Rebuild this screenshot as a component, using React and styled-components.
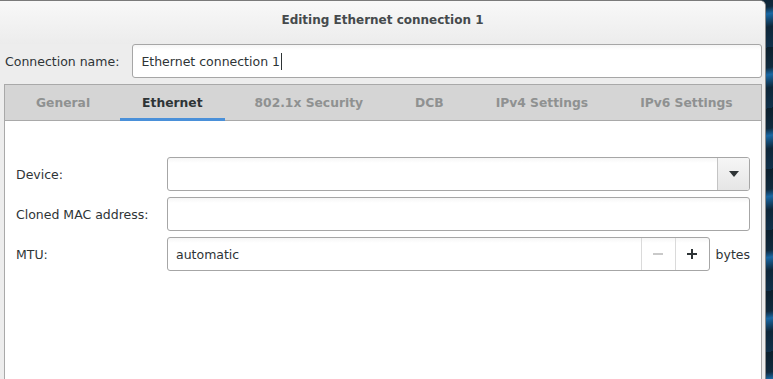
import React from "react";
import styled, { createGlobalStyle } from "styled-components";

const Global = createGlobalStyle`
  html, body { margin: 0; padding: 0; }
  body {
    width: 773px;
    height: 379px;
    overflow: hidden;
    font-family: "DejaVu Sans", "Liberation Sans", sans-serif;
    font-size: 12.5px;
    color: #2e3436;
    background:
      repeating-linear-gradient(170deg, #0c1f2c 0px, #102a3e 20px, #1967a3 27px, #0e2638 40px, #10304a 60px);
  }
`;

const Desktop = styled.div`
  width: 773px;
  height: 379px;
  display: flex;
`;

const Window = styled.div`
  width: 766px;
  height: 379px;
  box-sizing: border-box;
  background: #ededed;
  border-top: 1px solid #7a7a7a;
  border-right: 1px solid #8c8c8c;
  border-top-right-radius: 6px;
  display: flex;
  flex-direction: column;
  overflow: hidden;
`;

const TitleBar = styled.div`
  height: 43px;
  flex: none;
  display: flex;
  align-items: center;
  justify-content: center;
  padding-bottom: 6px;
  box-sizing: border-box;
  background: linear-gradient(#f8f8f8, #ececec);
  font-weight: bold;
  font-size: 12px;
  color: #454a4c;
`;

const NameRow = styled.div`
  display: flex;
  align-items: center;
  padding: 0 3px 0 5px;
  height: 34px;
  flex: none;
`;

const Label = styled.span`
  white-space: nowrap;
  color: #2e3436;
`;

const Entry = styled.div`
  flex: 1;
  height: 34px;
  box-sizing: border-box;
  border: 1px solid #a6a6a6;
  border-radius: 3px;
  background: linear-gradient(#f6f6f6, #ffffff 5px);
  display: flex;
  align-items: center;
  padding-left: ${(p) => p.$pad || 8}px;
  margin-left: ${(p) => p.$ml || 0}px;
  color: #2e3436;
  overflow: hidden;
`;

const Caret = styled.span`
  display: inline-block;
  width: 1px;
  height: 17px;
  background: #2e3436;
  margin-left: 1px;
`;

const Notebook = styled.div`
  margin: 6px 3px 0 4px;
  flex: 1;
  display: flex;
  flex-direction: column;
`;

const TabStrip = styled.div`
  height: 37px;
  box-sizing: border-box;
  background: #d5d5d5;
  border: 1px solid #a9a9a9;
  display: flex;
  padding-left: 9px;
  gap: 8px;
`;

const Tab = styled.div`
  padding: 0 22px;
  display: flex;
  align-items: center;
  font-weight: bold;
  font-size: 12.3px;
  color: ${(p) => (p.$active ? "#2e3436" : "#8f9191")};
  box-shadow: ${(p) => (p.$active ? "inset 0 -3px 0 #4a90d9" : "none")};
  margin-bottom: -1px;
  white-space: nowrap;
`;

const Page = styled.div`
  flex: 1;
  background: #ffffff;
  border-left: 1px solid #a9a9a9;
  border-right: 1px solid #a9a9a9;
  display: grid;
  grid-template-columns: 151px 1fr;
  grid-auto-rows: 34px;
  row-gap: 6px;
  align-content: start;
  padding: 36px 11px 0 11px;
`;

const FieldLabel = styled.div`
  display: flex;
  align-items: center;
  color: #2e3436;
`;

const Combo = styled.div`
  display: flex;
  height: 34px;
  box-sizing: border-box;
  border: 1px solid #a6a6a6;
  border-radius: 3px;
  overflow: hidden;
  background: linear-gradient(#f6f6f6, #ffffff 5px);
`;

const ComboText = styled.div`
  flex: 1;
`;

const ComboButton = styled.div`
  width: 31px;
  border-left: 1px solid #c4c4c4;
  background: linear-gradient(#f6f6f6, #e6e6e6);
  display: flex;
  align-items: center;
  justify-content: center;
`;

const SpinRow = styled.div`
  display: flex;
  align-items: center;
`;

const Spin = styled.div`
  flex: 1;
  display: flex;
  height: 34px;
  box-sizing: border-box;
  border: 1px solid #a6a6a6;
  border-radius: 3px;
  overflow: hidden;
  background: linear-gradient(#f6f6f6, #ffffff 5px);
`;

const SpinText = styled.div`
  flex: 1;
  display: flex;
  align-items: center;
  padding-left: 8px;
  color: #2e3436;
`;

const SpinButton = styled.div`
  width: 33px;
  border-left: 1px solid #dadada;
  display: flex;
  align-items: center;
  justify-content: center;
  color: ${(p) => (p.$disabled ? "#c9c9c9" : "#2e3436")};
`;

const Unit = styled.span`
  margin-left: 6px;
  color: #2e3436;
`;

const tabs = ["General", "Ethernet", "802.1x Security", "DCB", "IPv4 Settings", "IPv6 Settings"];

export default function App() {
  return (
    <>
      <Global />
      <Desktop>
        <Window>
          <TitleBar>Editing Ethernet connection 1</TitleBar>
          <NameRow>
            <Label>Connection name:</Label>
            <Entry $ml={13}>
              Ethernet connection 1<Caret />
            </Entry>
          </NameRow>
          <Notebook>
            <TabStrip>
              {tabs.map((t) => (
                <Tab key={t} $active={t === "Ethernet"}>
                  {t}
                </Tab>
              ))}
            </TabStrip>
            <Page>
              <FieldLabel>Device:</FieldLabel>
              <Combo>
                <ComboText />
                <ComboButton>
                  <svg width="10" height="6" viewBox="0 0 10 6">
                    <path d="M0 0 H10 L5 6 Z" fill="#2e3436" />
                  </svg>
                </ComboButton>
              </Combo>
              <FieldLabel>Cloned MAC address:</FieldLabel>
              <Entry />
              <FieldLabel>MTU:</FieldLabel>
              <SpinRow>
                <Spin>
                  <SpinText>automatic</SpinText>
                  <SpinButton $disabled>
                    <svg width="10" height="10" viewBox="0 0 10 10">
                      <rect x="0" y="4" width="10" height="2" fill="currentColor" />
                    </svg>
                  </SpinButton>
                  <SpinButton>
                    <svg width="10" height="10" viewBox="0 0 10 10">
                      <rect x="0" y="4" width="10" height="2" fill="currentColor" />
                      <rect x="4" y="0" width="2" height="10" fill="currentColor" />
                    </svg>
                  </SpinButton>
                </Spin>
                <Unit>bytes</Unit>
              </SpinRow>
            </Page>
          </Notebook>
        </Window>
      </Desktop>
    </>
  );
}
